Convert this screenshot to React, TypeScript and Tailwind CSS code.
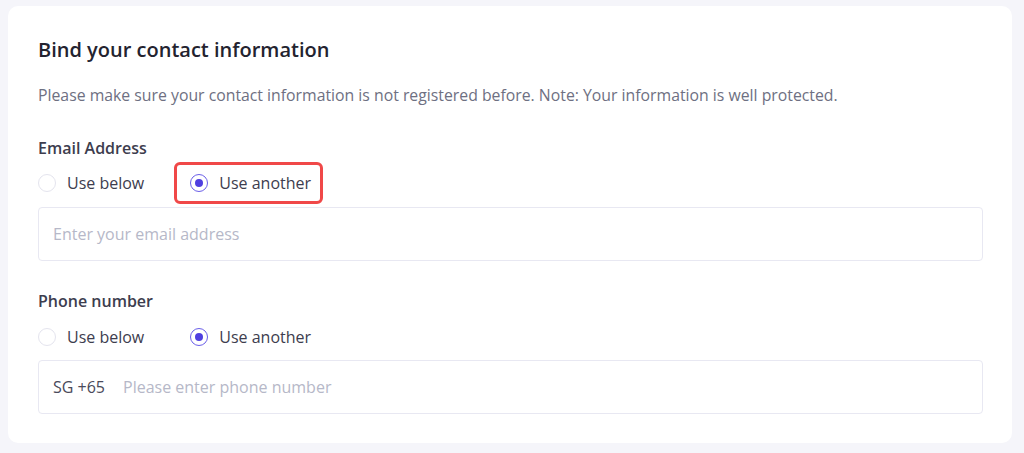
import React from "react";

function Radio({ label, checked }: { label: string; checked?: boolean }) {
  return (
    <div className="flex items-center gap-[11px]">
      <span
        className={
          checked
            ? "w-[18px] h-[18px] rounded-full border border-[#6a5ee8] flex items-center justify-center bg-white"
            : "w-[18px] h-[18px] rounded-full border border-[#e4e4ee] bg-white"
        }
      >
        {checked && <span className="w-[8px] h-[8px] rounded-full bg-[#4f3fe0]" />}
      </span>
      <span className="text-[16px] text-[#3d3d4e] leading-[22px]">{label}</span>
    </div>
  );
}

export default function App() {
  return (
    <div
      className="w-[1024px] h-[453px] bg-[#f5f5fa] pt-[6px] pl-[8px] pr-[12px]"
      style={{ fontFamily: "'Open Sans', 'Noto Sans', sans-serif" }}
    >
      <div className="bg-white rounded-[10px] pt-[30px] pb-[29px] pl-[30px] pr-[29px]">

        {/* HEADER */}

        <h1 className="text-[20px] leading-[28px] font-semibold text-[#23232f]">
          Bind your contact information
        </h1>

        <p className="text-[15.8px] leading-[22px] text-[#6e7082] mt-[20px]">
          Please make sure your contact information is not registered before. Note: Your information is well protected.
        </p>

        {/* EMAIL */}

        <p className="text-[16px] leading-[22px] font-semibold text-[#3d3d4e] mt-[31px]">
          Email Address
        </p>

        <div className="flex items-center gap-[46px] h-[24px] mt-[12px]">
          <Radio label="Use below" />
          <div className="relative">
            <Radio label="Use another" checked />
            <div className="absolute -left-[16px] -right-[12px] -top-[10px] -bottom-[10px] border-[3px] border-[#f04848] rounded-[6px]" />
          </div>
        </div>

        <div className="mt-[12px] h-[54px] border border-[#e8e8f2] rounded-[4px] flex items-center px-[14px]">
          <span className="text-[16px] text-[#b6b8c8]">Enter your email address</span>
        </div>

        {/* PHONE */}

        <p className="text-[16px] leading-[22px] font-semibold text-[#3d3d4e] mt-[29px]">
          Phone number
        </p>

        <div className="flex items-center gap-[46px] h-[24px] mt-[13px]">
          <Radio label="Use below" />
          <Radio label="Use another" checked />
        </div>

        <div className="mt-[11px] h-[54px] border border-[#e8e8f2] rounded-[4px] flex items-center px-[14px] gap-[18px]">
          <span className="text-[16px] text-[#4a4a5a]">SG +65</span>
          <span className="text-[16px] text-[#b6b8c8]">Please enter phone number</span>
        </div>

      </div>
    </div>
  );
}
